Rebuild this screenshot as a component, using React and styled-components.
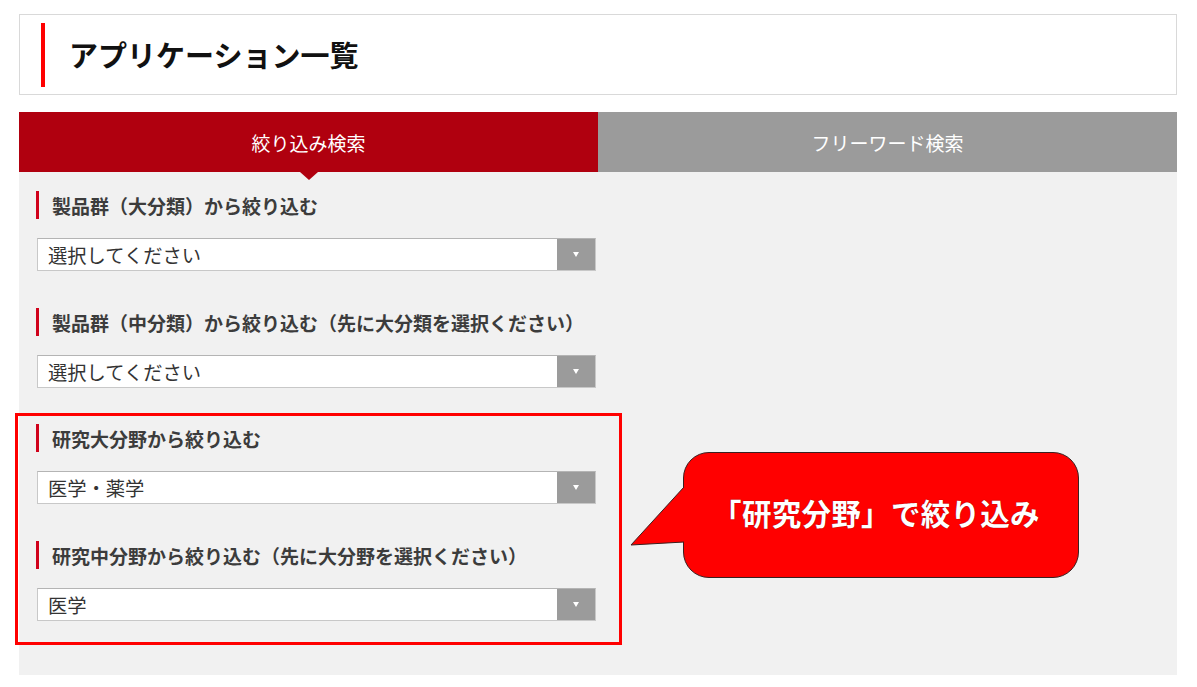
import React from "react";
import styled, { createGlobalStyle } from "styled-components";

const GlobalStyle = createGlobalStyle`
  html, body {
    margin: 0;
    padding: 0;
    background: #fff;
  }
  body {
    font-family: "Noto Sans CJK JP", "Noto Sans", sans-serif;
    color: #333;
  }
`;

const Page = styled.div`
  width: 1158px;
  padding: 14px 0 0 19px;
`;

const TitleBox = styled.div`
  height: 79px;
  border: 1px solid #d9d9d9;
  display: flex;
  align-items: center;
  padding-left: 21px;
`;

const TitleBar = styled.div`
  width: 4px;
  height: 64px;
  background: #f00;
  margin-right: 24px;
`;

const Title = styled.h1`
  margin: 0;
  font-size: 29px;
  font-weight: 700;
  color: #111;
  line-height: 1;
`;

const Tabs = styled.div`
  position: relative;
  z-index: 1;
  margin-top: 17px;
  display: grid;
  grid-template-columns: 579px 1fr;
  height: 60px;
`;

const Tab = styled.div`
  position: relative;
  display: flex;
  align-items: center;
  justify-content: center;
  background: ${(p) => (p.$active ? "#b0000f" : "#9b9b9b")};
  color: #fff;
  font-size: 19px;
  font-weight: 400;

  ${(p) =>
    p.$active &&
    `
    &::after {
      content: "";
      position: absolute;
      left: 50%;
      bottom: -8px;
      margin-left: -9px;
      border-left: 9px solid transparent;
      border-right: 9px solid transparent;
      border-top: 8px solid #b0000f;
    }
  `}
`;

const Panel = styled.div`
  position: relative;
  background: #f1f1f1;
  padding: 19px 0 54px 17px;
`;

const Field = styled.div`
  width: 560px;
  & + & {
    margin-top: 37px;
  }
`;

const Label = styled.div`
  height: 28px;
  display: flex;
  align-items: center;
  border-left: 3px solid #d0021b;
  padding-left: 13px;
  font-size: 19px;
  font-weight: 700;
  color: #3c3c3c;
  white-space: nowrap;
`;

const Select = styled.div`
  margin-top: 19px;
  margin-left: 1px;
  height: 31px;
  display: flex;
  background: #fff;
  border: 1px solid #c8c8c8;
  border-top-color: #b4b4b4;
`;

const SelectText = styled.div`
  flex: 1;
  display: flex;
  align-items: center;
  padding-left: 10px;
  font-size: 19.3px;
  color: #333;
`;

const Arrow = styled.div`
  width: 38px;
  background: #9b9b9b;
  display: flex;
  align-items: center;
  justify-content: center;

  &::before {
    content: "";
    border-left: 3.5px solid transparent;
    border-right: 3.5px solid transparent;
    border-top: 5px solid #fff;
  }
`;

const Group = styled.div`
  position: relative;
  margin-top: 36px;

  &::before {
    content: "";
    position: absolute;
    top: -11px;
    left: -21px;
    width: 607px;
    bottom: -24px;
    border: 3px solid #f00;
    box-sizing: border-box;
    pointer-events: none;
  }
`;

const Callout = styled.div`
  position: absolute;
  left: 664px;
  top: 280px;
  width: 396px;
  height: 126px;
  background: #f00;
  border: 1px solid #3a2020;
  border-radius: 26px;
  display: flex;
  align-items: center;
  justify-content: center;
  padding-bottom: 6px;
  box-sizing: border-box;
`;

const CalloutText = styled.span`
  color: #fff;
  font-size: 29.5px;
  font-weight: 700;
  letter-spacing: 0.3px;
  text-shadow: 0 0 1px #600;
  margin-left: -10px;
`;

const Tail = styled.svg`
  position: absolute;
  left: -54px;
  top: 34px;
  overflow: visible;
`;

function Dropdown({ label, value }) {
  return (
    <Field>
      <Label>{label}</Label>
      <Select>
        <SelectText>{value}</SelectText>
        <Arrow />
      </Select>
    </Field>
  );
}

export default function App() {
  return (
    <Page>
      <GlobalStyle />
      <TitleBox>
        <TitleBar />
        <Title>アプリケーション一覧</Title>
      </TitleBox>
      <Tabs>
        <Tab $active>絞り込み検索</Tab>
        <Tab>フリーワード検索</Tab>
      </Tabs>
      <Panel>
        <Dropdown label="製品群（大分類）から絞り込む" value="選択してください" />
        <Dropdown
          label="製品群（中分類）から絞り込む（先に大分類を選択ください）"
          value="選択してください"
        />
        <Group>
          <Dropdown label="研究大分野から絞り込む" value="医学・薬学" />
          <Dropdown
            label="研究中分野から絞り込む（先に大分野を選択ください）"
            value="医学"
          />
        </Group>
        <Callout>
          <Tail width="56" height="60">
            <polygon points="54,0 1,58 56,55" fill="#f00" />
            <polyline
              points="54,0 1,58 54,55"
              fill="none"
              stroke="#3a2020"
              strokeWidth="1"
            />
          </Tail>
          <CalloutText>「研究分野」で絞り込み</CalloutText>
        </Callout>
      </Panel>
    </Page>
  );
}
